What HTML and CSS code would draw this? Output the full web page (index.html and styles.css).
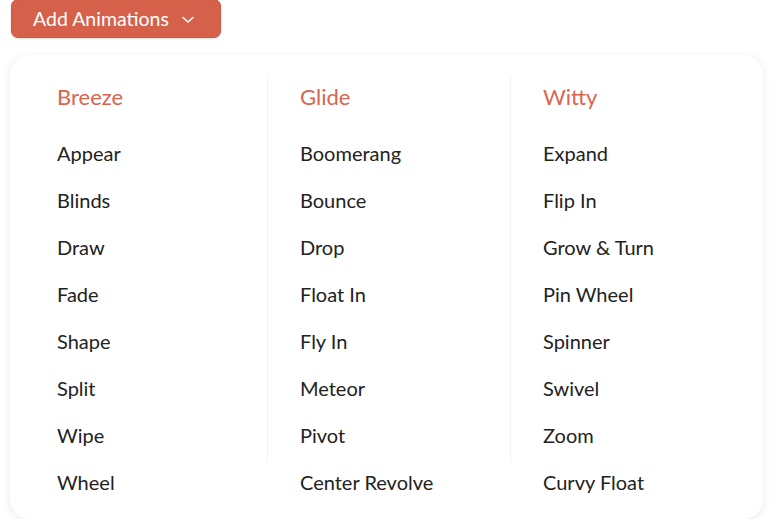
FILE: index.html
```html
<!DOCTYPE html>
<html lang="en">
<head>
  <meta charset="UTF-8">
  <meta name="viewport" content="width=device-width, initial-scale=1.0">
  <title>Add Animations</title>
  <link rel="stylesheet" href="styles.css">
</head>
<body>

  <!-- Dropdown trigger -->
  <button class="add-button">
    Add Animations
    <svg class="chevron" width="12" height="8" viewBox="0 0 12 8">
      <path d="M1 1.5 L6 6 L11 1.5" fill="none" stroke="#fff" stroke-width="1.6" stroke-linecap="round" stroke-linejoin="round"/>
    </svg>
  </button>

  <!-- Animation menu -->
  <div class="menu">
    <div class="menu-column">
      <h2>Breeze</h2>
      <ul>
        <li>Appear</li>
        <li>Blinds</li>
        <li>Draw</li>
        <li>Fade</li>
        <li>Shape</li>
        <li>Split</li>
        <li>Wipe</li>
        <li>Wheel</li>
      </ul>
    </div>
    <div class="menu-column divided">
      <h2>Glide</h2>
      <ul>
        <li>Boomerang</li>
        <li>Bounce</li>
        <li>Drop</li>
        <li>Float In</li>
        <li>Fly In</li>
        <li>Meteor</li>
        <li>Pivot</li>
        <li>Center Revolve</li>
      </ul>
    </div>
    <div class="menu-column divided">
      <h2>Witty</h2>
      <ul>
        <li>Expand</li>
        <li>Flip In</li>
        <li>Grow &amp; Turn</li>
        <li>Pin Wheel</li>
        <li>Spinner</li>
        <li>Swivel</li>
        <li>Zoom</li>
        <li>Curvy Float</li>
      </ul>
    </div>
  </div>

</body>
</html>
```

FILE: styles.css
```css
body {
  font-family: Lato, "Open Sans", sans-serif;
  margin: 0;
  padding: 0;
  background-color: #fff;
}

/* Button */
.add-button {
  display: flex;
  align-items: center;
  gap: 13px;
  height: 39px;
  width: 210px;
  margin: -1px 0 0 11px;
  padding: 0 0 0 21px;
  background-color: #d6614b;
  border: 1px solid #c95a45;
  border-radius: 7px;
  box-shadow: 0 1px 2px rgba(0, 0, 0, 0.15);
  color: #fff;
  font-family: Lato, sans-serif;
  font-size: 19.5px;
  cursor: pointer;
}

.chevron {
  margin-top: 2px;
}

/* Menu */
.menu {
  display: grid;
  grid-template-columns: 243px 243px 243px;
  width: 753px;
  box-sizing: border-box;
  margin: 17px 0 0 10px;
  padding: 18px 0 13px 14px;
  background-color: #fff;
  border-radius: 20px;
  box-shadow: 0 2px 10px rgba(0, 0, 0, 0.09);
}

.menu-column {
  position: relative;
  padding-left: 33px;
}

.menu-column.divided::before {
  content: "";
  position: absolute;
  left: 0;
  top: 2px;
  bottom: 44px;
  width: 1px;
  background-color: #f2f2f2;
}

.menu-column h2 {
  margin: 0 0 10px;
  font-size: 22px;
  font-weight: 400;
  line-height: 47px;
  color: #d9654f;
}

.menu-column ul {
  list-style-type: none;
  margin: 0;
  padding: 0;
}

.menu-column li {
  font-size: 20px;
  line-height: 47px;
  color: #222;
  cursor: pointer;
}
```
